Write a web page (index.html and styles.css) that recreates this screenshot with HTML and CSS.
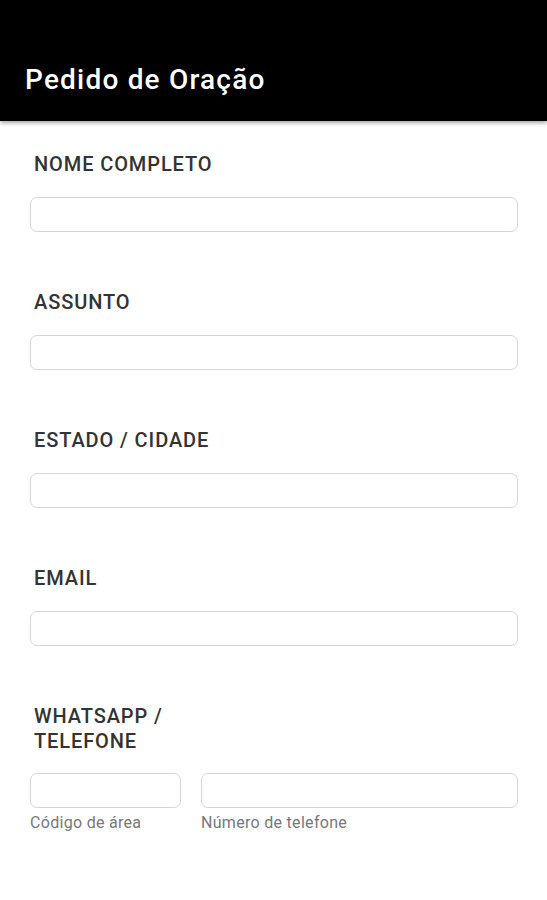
FILE: index.html
```html
<!DOCTYPE html>
<html lang="pt">
<head>
<meta charset="utf-8">
<title>Pedido de Oração</title>
<link rel="stylesheet" href="styles.css">
</head>
<body>
<header class="appbar">
  <div class="statusbar"></div>
  <h1 class="title">Pedido de Oração</h1>
</header>
<main class="form">
  <div class="field">
    <label class="label">NOME COMPLETO</label>
    <div class="input"></div>
  </div>
  <div class="field">
    <label class="label">ASSUNTO</label>
    <div class="input"></div>
  </div>
  <div class="field">
    <label class="label">ESTADO / CIDADE</label>
    <div class="input"></div>
  </div>
  <div class="field">
    <label class="label">EMAIL</label>
    <div class="input"></div>
  </div>
  <div class="field">
    <label class="label narrow">WHATSAPP / TELEFONE</label>
    <div class="phone">
      <div class="sub area">
        <div class="input"></div>
        <span class="hint">Código de área</span>
      </div>
      <div class="sub number">
        <div class="input"></div>
        <span class="hint">Número de telefone</span>
      </div>
    </div>
  </div>
</main>
</body>
</html>
```
FILE: styles.css
```css
* { box-sizing: border-box; }
html, body { margin: 0; padding: 0; background: #fff; }
body { font-family: Roboto, "Noto Sans", Arial, sans-serif; width: 547px; height: 900px; overflow: hidden; }
.appbar {
  background: #000;
  height: 121px;
  box-shadow: 0 2px 4px rgba(0,0,0,0.35);
  position: relative;
  z-index: 1;
}
.statusbar { height: 50px; }
.title {
  margin: 0;
  padding-left: 25px;
  color: #fff;
  font-weight: 500;
  font-size: 28px;
  line-height: 60px;
  letter-spacing: 1.2px;
}
.form {
  padding: 31px 29px 0 30px;
  display: flex;
  flex-direction: column;
  gap: 58px;
}
.field { display: flex; flex-direction: column; }
.label {
  display: block;
  color: #333;
  font-weight: 500;
  font-size: 20px;
  line-height: 24px;
  letter-spacing: 0.9px;
  padding-left: 4px;
  margin-bottom: 21px;
}
.label.narrow { width: 180px; line-height: 25px; margin-bottom: 19px; }
.input {
  height: 35px;
  border: 1.5px solid #d6d6d6;
  border-radius: 7px;
  background: #fff;
}
.phone { display: flex; gap: 20px; }
.sub { display: flex; flex-direction: column; }
.area { width: 151px; }
.number { flex: 1; }
.hint {
  color: #777;
  font-size: 16px;
  line-height: 20px;
  letter-spacing: 0.3px;
  margin-top: 5px;
}
```
